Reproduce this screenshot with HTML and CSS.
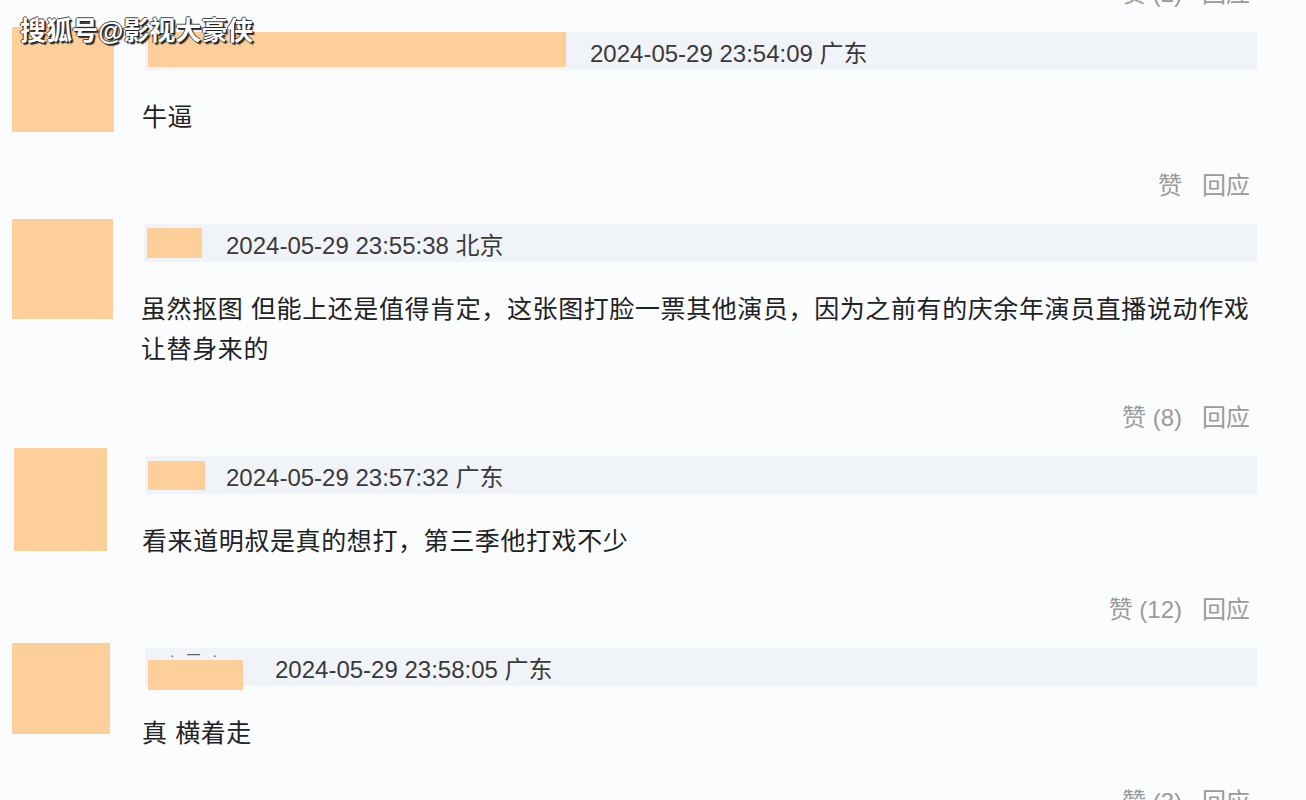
FILE: index.html
```html
<!DOCTYPE html>
<html lang="zh-CN">
<head>
  <meta charset="UTF-8" />
  <title>评论</title>
  <link rel="stylesheet" href="styles.css">
</head>
<body>

  <div class="watermark">搜狐号@影视大豪侠</div>

  <div class="comments">
    <div class="actions actions-top"><span>赞 (2)</span><span>回应</span></div>

    <div class="comment">
      <div class="avatar av1"></div>
      <div class="body">
        <div class="meta">
          <span class="name n1"></span>
          <span class="time">2024-05-29 23:54:09 广东</span>
        </div>
        <p class="text">牛逼</p>
        <div class="actions"><span>赞</span><span>回应</span></div>
      </div>
    </div>

    <div class="comment">
      <div class="avatar av2"></div>
      <div class="body">
        <div class="meta">
          <span class="name n2"></span>
          <span class="time">2024-05-29 23:55:38 北京</span>
        </div>
        <p class="text">虽然抠图 但能上还是值得肯定，这张图打脸一票其他演员，因为之前有的庆余年演员直播说动作戏让替身来的</p>
        <div class="actions"><span>赞 (8)</span><span>回应</span></div>
      </div>
    </div>

    <div class="comment c3">
      <div class="avatar av3"></div>
      <div class="body">
        <div class="meta">
          <span class="name n3"></span>
          <span class="time">2024-05-29 23:57:32 广东</span>
        </div>
        <p class="text">看来道明叔是真的想打，第三季他打戏不少</p>
        <div class="actions"><span>赞 (12)</span><span>回应</span></div>
      </div>
    </div>

    <div class="comment">
      <div class="avatar av4"></div>
      <div class="body">
        <div class="meta">
          <span class="name n4"><span class="peek">· 一 ·</span></span>
          <span class="time">2024-05-29 23:58:05 广东</span>
        </div>
        <p class="text">真 横着走</p>
        <div class="actions"><span>赞 (3)</span><span>回应</span></div>
      </div>
    </div>
  </div>

</body>
</html>
```

FILE: styles.css
```css
body {
  margin: 0;
  height: 800px;
  overflow: hidden;
  background: #fbfcfe;
  font-family: "Liberation Sans", "Noto Sans CJK SC", sans-serif;
  color: #222;
  position: relative;
}
.watermark {
  position: absolute;
  left: 20px;
  top: 10px;
  z-index: 2;
  font-size: 26px;
  font-weight: bold;
  color: #fff;
  text-shadow: 1px 1px 0 #222, -1px 0 0 #444, 0 -1px 0 #444, 2px 2px 1px #333;
}
.comments {
  margin-top: -26px;
  padding-right: 49px;
}
.comment {
  display: flex;
  margin-top: 13px;
}
.comment.c3 {
  margin-top: 10px;
}
.c3 .meta {
  margin-top: 8px;
}
.avatar {
  flex: none;
  background: #fecf98;
  margin-left: 12px;
  width: 102px;
  height: 105px;
}
.av2 { width: 101px; height: 100px; }
.av3 { margin-left: 14px; width: 93px; height: 103px; }
.av4 { width: 98px; height: 91px; }
.body {
  flex: 1;
  margin-left: 31px;
}
.av3 + .body { margin-left: 38px; }
.av4 + .body { margin-left: 35px; }
.meta {
  margin-top: 5px;
  height: 38px;
  background: #f0f3f7;
  display: flex;
  align-items: center;
  padding-left: 3px;
}
.name {
  background: #fecf98;
  height: 33px;
}
.n1 { width: 418px; height: 35px; align-self: flex-start; }
.n2 { width: 55px; height: 30px; }
.n3 { width: 57px; height: 29px; margin-right: -3px; }
.n4 {
  width: 95px;
  height: 30px;
  align-self: flex-start;
  margin-top: 12px;
  margin-right: 8px;
  position: relative;
}
.peek {
  position: absolute;
  left: 22px;
  top: -16px;
  font-size: 14px;
  color: #666;
  letter-spacing: 4px;
}
.time {
  margin-left: 24px;
  font-size: 24px;
  color: #3a3a3a;
}
.text {
  margin: 27px -8px 0 -3px;
  font-size: 25px;
  letter-spacing: 0.6px;
  line-height: 40px;
}
.actions {
  margin-top: 29px;
  margin-right: 7px;
  display: flex;
  justify-content: flex-end;
  gap: 20px;
  font-size: 24px;
  line-height: 40px;
  color: #9a9a9a;
}
.actions-top {
  margin-top: 0;
}
```
